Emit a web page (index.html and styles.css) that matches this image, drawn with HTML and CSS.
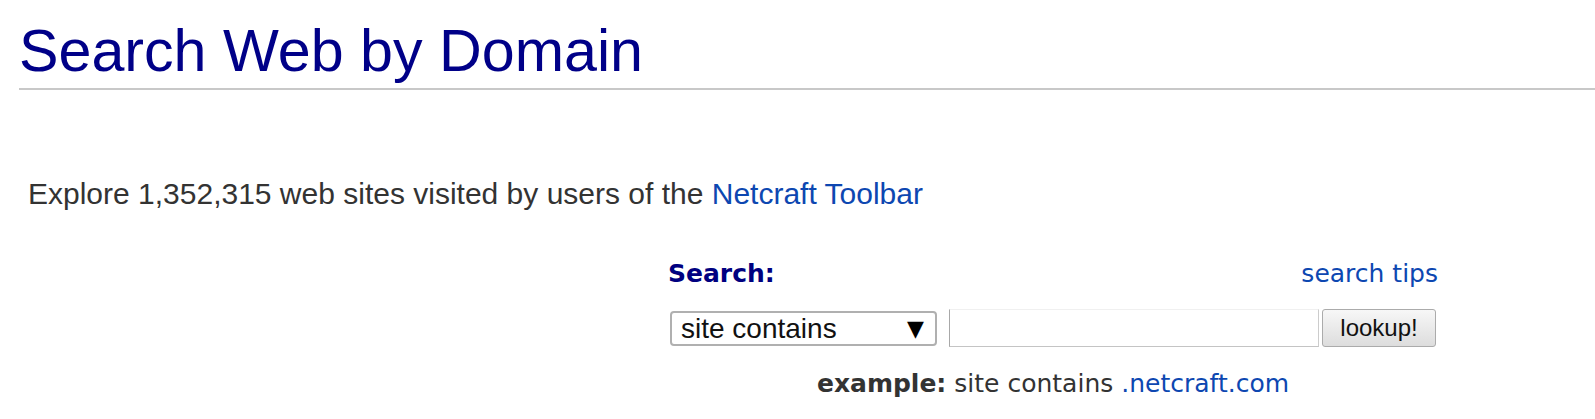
FILE: index.html
```html
<!DOCTYPE html>
<html lang="en">
<head>
<meta charset="utf-8">
<title>Search Web by Domain</title>
<link rel="stylesheet" href="styles.css">
</head>
<body>
<div class="page">
  <h1 class="title">Search Web by Domain</h1>
  <p class="intro">Explore 1,352,315 web sites visited by users of the <a href="#" class="link">Netcraft Toolbar</a></p>
  <form class="search">
    <div class="search-head">
      <span class="search-label">Search:</span>
      <a href="#" class="link tips">search tips</a>
    </div>
    <div class="search-row">
      <div class="select-wrap">
        <select class="select">
          <option>site contains</option>
          <option>site starts with</option>
          <option>site ends with</option>
        </select>
        <span class="select-arrow">▼</span>
      </div>
      <input type="text" class="query">
      <button type="button" class="lookup">lookup!</button>
    </div>
    <div class="example"><b>example:</b> site contains <a href="#" class="link">.netcraft.com</a></div>
  </form>
</div>
</body>
</html>
```
FILE: styles.css
```css
html, body {
  margin: 0;
  padding: 0;
  background: #ffffff;
}

.page {
  padding-left: 19px;
}

.title {
  margin: 16px 0 0 0;
  padding: 0 0 3px 0;
  font-family: "Liberation Sans", Arial, sans-serif;
  font-weight: normal;
  font-size: 59.2px;
  line-height: normal;
  color: #000088;
  border-bottom: 2px solid #c8c8c8;
}

.intro {
  margin: 87px 0 0 9px;
  font-family: "Liberation Sans", Arial, sans-serif;
  font-size: 30px;
  line-height: normal;
  color: #333333;
}

.link {
  color: #0d47b1;
  text-decoration: none;
}

.search {
  margin: 48px 0 0 649px;
  width: 770px;
  font-family: "DejaVu Sans", Verdana, sans-serif;
  font-size: 25px;
  line-height: normal;
  color: #333333;
}

.search-head {
  display: flex;
  justify-content: space-between;
  align-items: baseline;
}

.search-label {
  font-weight: bold;
  color: #000080;
}

.search-row {
  display: flex;
  align-items: center;
  margin: 21px 0 0 2px;
}

.select-wrap {
  position: relative;
  width: 267px;
  height: 35px;
}

.select {
  -webkit-appearance: none;
  appearance: none;
  width: 100%;
  height: 100%;
  box-sizing: border-box;
  margin: 0;
  padding: 0 0 0 9px;
  border: 2px solid #b0b0b0;
  border-radius: 4px;
  background: #ffffff;
  font-family: "Liberation Sans", Arial, sans-serif;
  font-size: 28px;
  color: #111111;
}

.select-arrow {
  position: absolute;
  right: 13px;
  top: 50%;
  transform: translateY(-50%);
  font-family: "DejaVu Sans", sans-serif;
  font-size: 22px;
  color: #000000;
  pointer-events: none;
}

.query {
  width: 370px;
  height: 38px;
  box-sizing: border-box;
  margin: 0 0 0 12px;
  padding: 0 4px;
  border-style: solid;
  border-width: 1px;
  border-color: #f0f0f0 #cccccc #c4c4c4 #a8a8a8;
  background: #ffffff;
  font-family: "Liberation Sans", Arial, sans-serif;
  font-size: 24px;
}

.lookup {
  width: 114px;
  height: 38px;
  box-sizing: border-box;
  margin: 0 0 0 3px;
  padding: 0;
  border: 1px solid #ababab;
  border-radius: 3px;
  background: linear-gradient(#f7f7f7, #dddddd);
  font-family: "Liberation Sans", Arial, sans-serif;
  font-size: 24px;
  color: #111111;
}

.example {
  margin-top: 22px;
  text-align: center;
}

.example b {
  color: #333333;
}
```
